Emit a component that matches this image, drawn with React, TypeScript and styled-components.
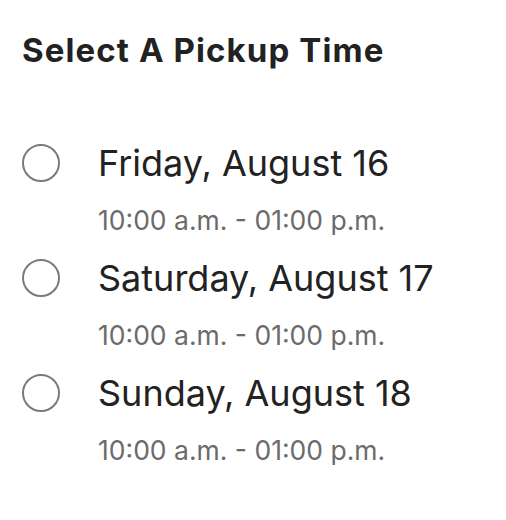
import React, { FC } from 'react'
import styled, { createGlobalStyle } from 'styled-components'

const GlobalStyle = createGlobalStyle`
  html, body {
    margin: 0;
    padding: 0;
    background: #ffffff;
  }
  body {
    font-family: Inter, Lato, "Noto Sans", "Liberation Sans", sans-serif;
  }
`

const Page = styled.div`
  width: 506px;
  height: 520px;
  padding: 30px 0 0 22px;
  box-sizing: border-box;
  background: #ffffff;
`

const Title = styled.h2`
  margin: 0 0 72px;
  font-size: 33px;
  line-height: 40px;
  font-weight: 700;
  letter-spacing: 1.1px;
  color: #222222;
`

const OptionList = styled.div`
  display: flex;
  flex-direction: column;
  gap: 21px;
`

const Option = styled.label`
  display: flex;
  align-items: flex-start;
  gap: 38px;
  cursor: pointer;
`

const Radio = styled.span`
  flex: none;
  width: 38px;
  height: 38px;
  margin-top: 2px;
  box-sizing: border-box;
  border: 2px solid #7a7a7a;
  border-radius: 50%;
`

const OptionText = styled.div`
  display: flex;
  flex-direction: column;
  gap: 20px;
`

const DayLabel = styled.div`
  font-size: 36px;
  line-height: 42px;
  color: #222222;
`

const TimeRange = styled.div`
  font-size: 26.5px;
  line-height: 32px;
  color: #6b6b6b;
`

interface Slot {
  day: string
  time: string
}

const slots: Slot[] = [
  { day: 'Friday, August 16', time: '10:00 a.m. - 01:00 p.m.' },
  { day: 'Saturday, August 17', time: '10:00 a.m. - 01:00 p.m.' },
  { day: 'Sunday, August 18', time: '10:00 a.m. - 01:00 p.m.' },
]

const App: FC = () => {
  return (
    <>
      <GlobalStyle />
      <Page>
        <Title>Select A Pickup Time</Title>
        <OptionList>
          {slots.map((slot) => (
            <Option key={slot.day}>
              <Radio />
              <OptionText>
                <DayLabel>{slot.day}</DayLabel>
                <TimeRange>{slot.time}</TimeRange>
              </OptionText>
            </Option>
          ))}
        </OptionList>
      </Page>
    </>
  )
}

export default App
